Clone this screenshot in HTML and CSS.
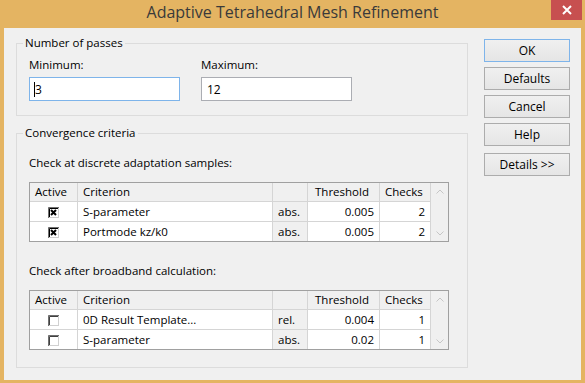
FILE: index.html
```html
<!DOCTYPE html>
<html lang="en">
<head>
    <meta charset="UTF-8">
    <title>Adaptive Tetrahedral Mesh Refinement</title>
    <link rel="stylesheet" href="styles.css">
</head>
<body>
    <div class="window">
        <div class="titlebar">
            <span class="title">Adaptive Tetrahedral Mesh Refinement</span>
            <div class="close">
                <svg width="10" height="10" viewBox="0 0 10 10"><path d="M1 1l8 8M9 1L1 9" stroke="#fff" stroke-width="2"/></svg>
            </div>
        </div>
        <div class="client">
            <div class="main">
                <fieldset class="group passes">
                    <legend>Number of passes</legend>
                    <div class="fields">
                        <div class="field">
                            <label for="minPasses">Minimum:</label>
                            <input type="text" id="minPasses" class="focused" value="3">
                        </div>
                        <div class="field">
                            <label for="maxPasses">Maximum:</label>
                            <input type="text" id="maxPasses" value="12">
                        </div>
                    </div>
                </fieldset>

                <fieldset class="group criteria">
                    <legend>Convergence criteria</legend>
                    <div class="caption">Check at discrete adaptation samples:</div>
                    <div class="grid">
                        <table>
                            <colgroup>
                                <col class="c-active"><col class="c-crit"><col class="c-unit"><col class="c-thr"><col class="c-chk">
                            </colgroup>
                            <tr>
                                <th>Active</th><th>Criterion</th><th></th><th class="pad">Threshold</th><th>Checks</th>
                            </tr>
                            <tr>
                                <td class="mid"><svg class="check" width="11" height="11" viewBox="0 0 11 11"><rect x="0.5" y="0.5" width="10" height="10" fill="#fff" stroke="#d0d0d0"/><path d="M0.5 11V0.5H11" stroke="#707070" fill="none"/><path d="M1.5 10V1.5H10" stroke="#000" fill="none"/><path d="M3 3l5 5M8 3l-5 5" stroke="#000" stroke-width="2"/></svg></td>
                                <td>S-parameter</td><td class="ro">abs.</td><td class="num">0.005</td><td class="num">2</td>
                            </tr>
                            <tr>
                                <td class="mid"><svg class="check" width="11" height="11" viewBox="0 0 11 11"><rect x="0.5" y="0.5" width="10" height="10" fill="#fff" stroke="#d0d0d0"/><path d="M0.5 11V0.5H11" stroke="#707070" fill="none"/><path d="M1.5 10V1.5H10" stroke="#000" fill="none"/><path d="M3 3l5 5M8 3l-5 5" stroke="#000" stroke-width="2"/></svg></td>
                                <td>Portmode kz/k0</td><td class="ro">abs.</td><td class="num">0.005</td><td class="num">2</td>
                            </tr>
                        </table>
                        <div class="scroll">
                            <svg width="8" height="5" viewBox="0 0 8 5"><path d="M0.5 4.5L4 1l3.5 3.5" stroke="#c6c6c6" fill="none"/></svg>
                            <svg width="8" height="5" viewBox="0 0 8 5"><path d="M0.5 0.5L4 4l3.5-3.5" stroke="#c6c6c6" fill="none"/></svg>
                        </div>
                    </div>

                    <div class="caption second">Check after broadband calculation:</div>
                    <div class="grid">
                        <table>
                            <colgroup>
                                <col class="c-active"><col class="c-crit"><col class="c-unit"><col class="c-thr"><col class="c-chk">
                            </colgroup>
                            <tr>
                                <th>Active</th><th>Criterion</th><th></th><th class="pad">Threshold</th><th>Checks</th>
                            </tr>
                            <tr>
                                <td class="mid"><svg class="check" width="11" height="11" viewBox="0 0 11 11"><rect x="0.5" y="0.5" width="10" height="10" fill="#fff" stroke="#d0d0d0"/><path d="M0.5 11V0.5H11" stroke="#707070" fill="none"/><path d="M1.5 10V1.5H10" stroke="#404040" fill="none"/></svg></td>
                                <td>0D Result Template...</td><td class="ro">rel.</td><td class="num">0.004</td><td class="num">1</td>
                            </tr>
                            <tr>
                                <td class="mid"><svg class="check" width="11" height="11" viewBox="0 0 11 11"><rect x="0.5" y="0.5" width="10" height="10" fill="#fff" stroke="#d0d0d0"/><path d="M0.5 11V0.5H11" stroke="#707070" fill="none"/><path d="M1.5 10V1.5H10" stroke="#404040" fill="none"/></svg></td>
                                <td>S-parameter</td><td class="ro">abs.</td><td class="num">0.02</td><td class="num">1</td>
                            </tr>
                        </table>
                        <div class="scroll">
                            <svg width="8" height="5" viewBox="0 0 8 5"><path d="M0.5 4.5L4 1l3.5 3.5" stroke="#c6c6c6" fill="none"/></svg>
                            <svg width="8" height="5" viewBox="0 0 8 5"><path d="M0.5 0.5L4 4l3.5-3.5" stroke="#c6c6c6" fill="none"/></svg>
                        </div>
                    </div>
                </fieldset>
            </div>

            <div class="buttons">
                <button class="btn default">OK</button>
                <button class="btn">Defaults</button>
                <button class="btn">Cancel</button>
                <button class="btn">Help</button>
                <button class="btn details">Details &gt;&gt;</button>
            </div>
        </div>
    </div>
</body>
</html>
```

FILE: styles.css
```css
body {
    margin: 0;
    font-family: 'Open Sans', 'Noto Sans', sans-serif;
    font-size: 11.5px;
    color: #000;
}
.window {
    width: 585px;
    height: 383px;
    background: #e4b462;
    display: flex;
    flex-direction: column;
}
.titlebar {
    height: 28px;
    position: relative;
    text-align: center;
}
.title {
    font-size: 16px;
    line-height: 24px;
    color: #3a3a3a;
}
.close {
    position: absolute;
    top: 0;
    right: 3px;
    width: 31px;
    height: 20px;
    background: #c75050;
    display: flex;
    align-items: center;
    justify-content: center;
}
.client {
    flex: 1;
    margin: 0 4px 3px;
    background: #f0f0f0;
    display: flex;
    padding: 7px 0 0 12px;
}
.main {
    width: 452px;
}
.group {
    margin: 0;
    border: 1px solid #dcdcdc;
    padding: 6px 12px 14px;
}
.group legend {
    padding: 0 2px;
    margin-left: -6px;
    line-height: 16px;
}
.fields {
    display: flex;
    gap: 21px;
}
.field label {
    display: block;
    line-height: 16px;
    margin-bottom: 4px;
}
.field input {
    width: 151px;
    height: 24px;
    box-sizing: border-box;
    border: 1px solid #abadb3;
    padding: 0 5px;
    font-family: inherit;
    font-size: 12px;
    outline: none;
}
.field input.focused {
    border-color: #7eb4ea;
    background: linear-gradient(#000, #000) 4px 4px / 1px 15px no-repeat, #fff;
}
.criteria {
    margin-top: 9px;
    padding: 14px 12px 17px;
}
.caption {
    line-height: 16px;
    margin-bottom: 11px;
}
.caption.second {
    margin-top: 21px;
}
.grid {
    display: flex;
    width: 420px;
    box-sizing: border-box;
    border: 1px solid #a0a0a0;
    background: #fff;
}
.grid table {
    border-spacing: 0;
    table-layout: fixed;
    width: 401px;
}
.c-active { width: 48px; }
.c-crit { width: 195px; }
.c-unit { width: 35px; }
.c-thr { width: 72px; }
.c-chk { width: 51px; }
.grid th,
.grid td {
    padding: 0 5px;
    border-right: 1px solid #d5d5d5;
    border-bottom: 1px solid #d5d5d5;
    white-space: nowrap;
    overflow: hidden;
    text-align: left;
    font-weight: normal;
}
.grid th {
    line-height: 18px;
    background: #f0f0f0;
}
.grid th.pad {
    padding-left: 7px;
}
.grid td {
    line-height: 19px;
}
.grid tr:last-child td {
    border-bottom: none;
}
.grid td.ro {
    background: #f0f0f0;
}
.grid td.num {
    text-align: right;
}
.grid td.mid {
    text-align: center;
    padding: 0;
}
.check {
    vertical-align: middle;
}
.scroll {
    width: 17px;
    background: #f0f0f0;
    display: flex;
    flex-direction: column;
    justify-content: space-between;
    align-items: center;
    padding: 6px 0 5px;
    box-sizing: border-box;
}
.buttons {
    margin-left: 16px;
    padding-top: 4px;
    display: flex;
    flex-direction: column;
    gap: 5px;
}
.btn {
    width: 86px;
    height: 23px;
    border: 1px solid #acacac;
    background: linear-gradient(#f0f0f0, #e5e5e5);
    font-family: inherit;
    font-size: 12px;
    color: #000;
    padding: 0;
}
.btn.default {
    border-color: #7eb4ea;
}
.btn.details {
    margin-top: 2px;
}
```
